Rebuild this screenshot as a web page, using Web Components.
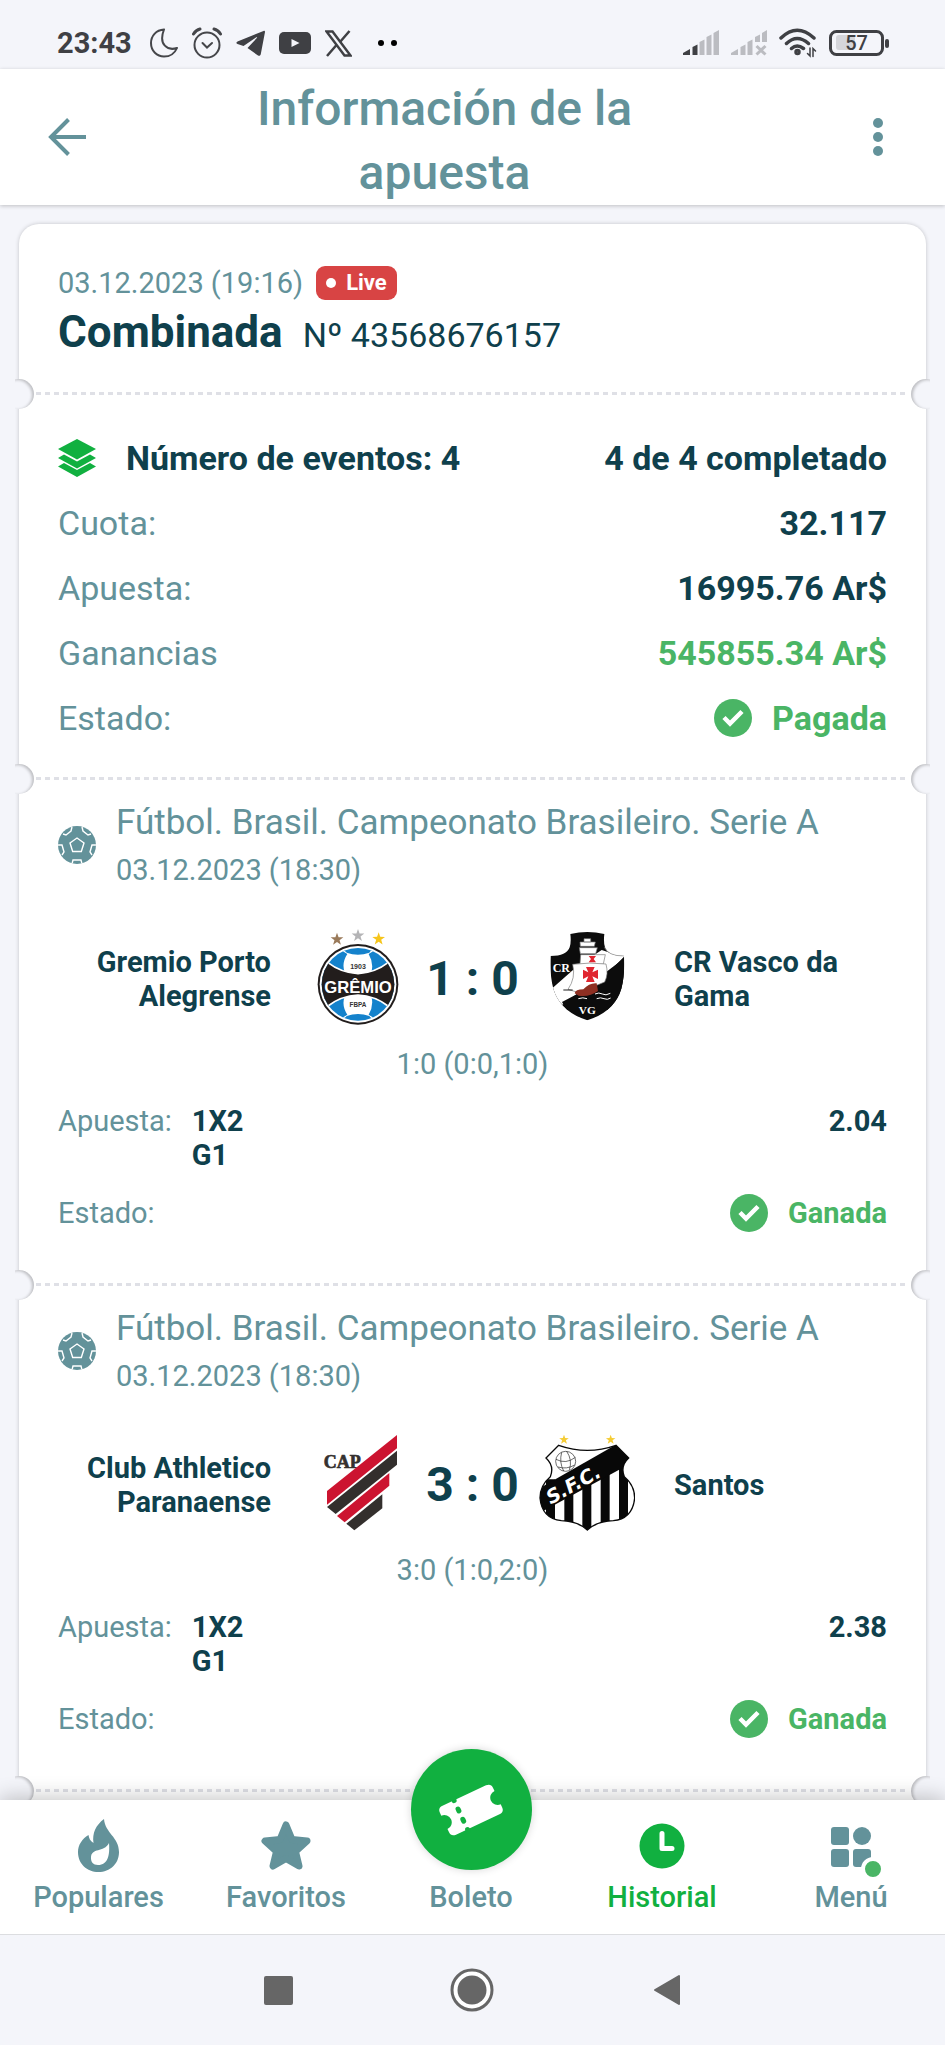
<!DOCTYPE html>
<html lang="es">
<head>
<meta charset="utf-8">
<meta name="viewport" content="width=device-width, initial-scale=1">
<title>Información de la apuesta</title>
<style>
  :root {
    --bg: #f4f5fa;
    --muted: #63929a;
    --dark: #0f404c;
    --green: #11b040;
    --won: #4ab565;
  }
  body {
    margin: 0;
    background: var(--bg);
    color: var(--dark);
    font-family: Roboto, "Liberation Sans", sans-serif;
  }
</style>
</head>
<body>
<bet-page></bet-page>

<script>
const ICONS = {
  moon: `<svg width="28" height="30" viewBox="0 0 28 30" fill="none" stroke="#45464a" stroke-width="2" stroke-linejoin="round"><path d="M14 1.500C6 2 1 8 1 15c0 8 6 13.500 13 13.500 6 0 11-3.500 13-8.500-9 3-19-3-13-18.500z"/></svg>`,
  alarm: `<svg width="30" height="32" viewBox="0 0 30 32" fill="none" stroke="#45464a" stroke-width="2" stroke-linecap="round"><circle cx="15" cy="18" r="12.500"/><path d="M1.500 7Q4 3 8 2M28.500 7Q26 3 22 2" stroke-width="3"/><path d="M10.500 16l4.500 4.500 5-4.500"/></svg>`,
  telegram: `<svg width="29" height="26" viewBox="0 0 29 26" fill="#3f4044"><path d="M27.500 1L1.500 11.500c-1.500.8-1.500 2 0 2.500l6 2L20 7.500c1-.5 1.500 0 .8.600L11.500 18l10.500 7.500c1.500.8 2.500 0 2.800-1.500L29 2c0-1.200-.5-1.500-1.500-1z"/></svg>`,
  youtube: `<svg width="32" height="24" viewBox="0 0 32 24"><rect y="1" width="32" height="22" rx="5" fill="#3f4044"/><path d="M12.500 8v8l8-4z" fill="#f4f5fa"/></svg>`,
  x: `<svg width="27" height="27" viewBox="0 0 27 27" fill="none" stroke="#3f4044"><path d="M1.500 1.500h6l18 24h-6z" stroke-width="2.500"/><path d="M24.500 1L15 12M11.500 15L2 26" stroke-width="2.500"/></svg>`,
  more: `<svg width="31" height="8" viewBox="0 0 31 8"><circle cx="15" cy="4" r="3"/><circle cx="28" cy="4" r="3"/></svg>`,
  signal: `<svg width="36" height="26" viewBox="0 0 36 26"><g fill="#3f4044"><path d="M0 25v-2l7-4v6z"/><path d="M9.500 25V17l5-2.500V25z"/></g><g fill="#bbbcc1"><path d="M16.500 25V12l5-2.500V25zM23.500 25V7l5-2.500V25zM30.500 25V3L36 0v25z"/></g></svg>`,
  nosignal: `<svg width="36" height="26" viewBox="0 0 36 26"><path fill="#bbbcc1" d="M0 25v-2l7-4v6zM9.500 25V17l5-2.500V25zM16.500 25V12l5-2.500V25zM24 12V7l5-2.500V12zM31 12V3l5-3v12z"/><path d="M25.500 16l9 8.500M34.500 16l-9 8.500" stroke="#bbbcc1" stroke-width="3"/></svg>`,
  wifi: `<svg width="38" height="30" viewBox="0 0 38 30" fill="none" stroke="#3f4044" stroke-width="3.500" stroke-linecap="round"><path d="M2 10Q18 -5.500 35 10M7.500 15.500Q18 5.500 29.500 15.500M12.500 20.500Q18 15.500 24.500 20.500" /><circle cx="18.500" cy="24" r="1.500"/><path d="M31 20v8l-2.500-2.500M34 28.500v-8l2.500 2.500" stroke-width="1.500"/></svg>`,
  battery: `<svg width="60" height="28" viewBox="0 0 60 28"><rect x="7" y="6" width="19" height="15" rx="3" fill="#d5d6db"/><rect x="1.500" y="2.500" width="52" height="23" rx="6" fill="none" stroke="#3f4044" stroke-width="3"/><rect x="56" y="10" width="4" height="9" rx="2" fill="#3f4044"/><text x="27.500" y="21" font-family="Roboto, sans-serif" font-size="20" font-weight="500" text-anchor="middle" fill="#3f4044">57</text></svg>`,
  back: `<svg width="38" height="38" viewBox="0 0 38 38" fill="none" stroke="#63929a" stroke-width="4"><path d="M38 19H3M20.500 1.500L3 19l17.500 17.500"/></svg>`,
  dots: `<svg width="10" height="38" viewBox="0 0 10 38" fill="#63929a"><circle cx="5" cy="5" r="5"/><circle cx="5" cy="19" r="5"/><circle cx="5" cy="33" r="5"/></svg>`,
  layers: `<svg width="38" height="38" viewBox="0 0 38 38" fill="#11b040"><path d="M19 0l19 10-19 10.500L0 10z"/><path d="M0 19l6-3.500 13 7 13-7 6 3.500-19 10.500z"/><path d="M0 27.500L6 24l13 7 13-7 6 3.500L19 38z"/></svg>`,
  ball: `<svg width="38" height="38" viewBox="0 0 38 38"><defs><clipPath id="c"><circle cx="19" cy="19" r="19"/></clipPath></defs><g clip-path="url(#c)"><rect width="38" height="38" fill="#63929a"/><g fill="none" stroke="#fff" stroke-width="1.400"><path d="M19 12l7 5-2.700 8.500h-8.600L12 17z"/><path d="M14 1l-1 4-5 4-3-1M24 1l1 4 5 4 3-1M0 19l4 0 2 7-2 3M38 19h-4l-2 7 2 3M14 38l1-4h8l1 4"/></g></g></svg>`,
  check: `<svg width="38" height="38" viewBox="0 0 38 38"><circle cx="19" cy="19" r="19" fill="#4ab565"/><path d="M10 18.500l6 6L28 12.500" fill="none" stroke="#fff" stroke-width="4.500"/></svg>`,
  flame: `<svg width="42" height="54" viewBox="0 0 42 54"><path fill="#63929a" fill-rule="evenodd" d="M26 0C18 6 14 14 15.500 24 12 22 11 19 10.500 16 4 20 0 26 0 33c0 12 9 20 20.500 20S41 45 41 33C41 18 27 14 26 0zM31 24c1 12-1 22-11 22-5 0-7-3-7-7 0-11 13-5 18-15z"/></svg>`,
  star: `<svg width="52" height="50" viewBox="0 0 52 50"><path d="M26 4l6 14.500 15 1.500-11.500 10.500L39 45l-13-7.500L13 45l3.500-14.500L5 20l15-1.500z" fill="#63929a" stroke="#63929a" stroke-width="7" stroke-linejoin="round"/></svg>`,
  clock: `<svg width="46" height="46" viewBox="0 0 46 46"><circle cx="23" cy="23" r="22.500" fill="#11b040"/><path d="M23 10.500v15h10" fill="none" stroke="#fff" stroke-width="5" stroke-linecap="round" stroke-linejoin="round"/></svg>`,
  grid: `<svg width="40" height="62" viewBox="0 -12 40 62" overflow="visible"><g fill="#63929a"><rect width="18" height="18" rx="3"/><circle cx="31" cy="9" r="9"/><rect y="22" width="18" height="18" rx="3"/><rect x="22" y="22" width="18" height="18" rx="3"/></g><circle cx="42" cy="42" r="10" fill="#4ab565" stroke="#fff" stroke-width="4"/></svg>`,
  ticket: `<svg width="66" height="58" viewBox="-99 -87 198 174"><g transform="rotate(-25)"><path fill="#fff" d="M-72 -48H72Q88 -48 88 -32V-22A22 22 0 0 0 88 22V32Q88 48 72 48H-72Q-88 48 -88 32V22A22 22 0 0 0 -88 -22V-32Q-88 -48 -72 -48z"/><path d="M-34 -53V53" stroke="#11b040" stroke-width="15" stroke-linecap="round" stroke-dasharray="6 28"/></g></svg>`,
  square: `<svg width="29" height="29" viewBox="0 0 29 29"><rect width="29" height="29" rx="2" fill="#666"/></svg>`,
  home: `<svg width="44" height="44" viewBox="0 0 44 44"><circle cx="22" cy="22" r="20" fill="#fff" stroke="#666" stroke-width="3"/><circle cx="22" cy="22" r="14.500" fill="#666"/></svg>`,
  triangle: `<svg width="28" height="32" viewBox="0 0 28 32"><path d="M2 16L26 2v28z" fill="#666" stroke="#666" stroke-width="2" stroke-linejoin="round"/></svg>`
};

// five pointed star for the club crests
function starPath(cx, cy, r) {
  let points = [];
  for (let i = 0; i < 10; i++) {
    const radius = i % 2 ? r * 0.4 : r;
    const angle = Math.PI * i / 5 - Math.PI / 2;
    points.push((cx + radius * Math.cos(angle)).toFixed(1) + ',' + (cy + radius * Math.sin(angle)).toFixed(1));
  }
  return points.join(' ');
}

const CRESTS = {
  gremio: `<svg viewBox="30 57 288 288">
    <polygon points="${starPath(111, 88, 20)}" fill="#9a7a5a"/>
    <polygon points="${starPath(174, 77, 20)}" fill="#b4b4b6"/>
    <polygon points="${starPath(236, 87, 20)}" fill="#f6c51b"/>
    <defs><clipPath id="g"><circle cx="174" cy="223" r="109"/></clipPath></defs>
    <circle cx="174" cy="223" r="121" fill="#221d1c"/>
    <circle cx="174" cy="223" r="115" fill="#fff"/>
    <g clip-path="url(#g)">
      <rect x="60" y="100" width="230" height="250" fill="#1482cc"/>
      <g fill="#fff">
        <path d="M110 112Q140 124 140 128Q174 140 208 128Q214 118 238 112L206 132Q222 160 214 186Q174 204 134 186Q124 160 142 132z"/>
        <path d="M110 334Q140 322 140 318Q174 306 208 318Q214 328 238 334L206 314Q222 286 214 260Q174 242 134 260Q124 286 142 314z"/>
      </g>
      <path d="M50 130L84 158Q122 188 174 191Q226 188 264 158L300 130V316L264 288Q226 258 174 255Q122 258 84 288L50 316z" fill="#221d1c" stroke="#fff" stroke-width="5"/>
    </g>
    <text x="174" y="249" text-anchor="middle" font-family="Liberation Sans, sans-serif" font-weight="700" font-size="50" fill="#fff">GRÊMIO</text>
    <text x="174" y="176" text-anchor="middle" font-family="Liberation Sans, sans-serif" font-weight="700" font-size="21" fill="#333">1903</text>
    <text x="174" y="290" text-anchor="middle" font-family="Liberation Sans, sans-serif" font-weight="700" font-size="19" fill="#333">FBPA</text>
  </svg>`,
  vasco: `<svg viewBox="717 57 288 288">
    <defs><clipPath id="v"><path d="M811 72Q862 60 913 72Q910 96 915 112Q924 138 972 138Q975 196 964 236Q944 304 862 331Q780 304 760 236Q749 196 752 138Q800 138 809 112Q814 96 811 72z"/></clipPath></defs>
    <g clip-path="url(#v)">
      <rect x="740" y="60" width="245" height="280" fill="#0c0c0c"/>
      <path d="M905 120L930 128 985 136 788 284 740 250 830 170z" fill="#fff"/>
      <path d="M896 216L972 140 985 300 800 300 786 276 836 250z" fill="#0c0c0c"/>
    </g>
    <path d="M913 112Q924 138 972 138" fill="none" stroke="#999" stroke-width="2"/>
    <g fill="#fff" stroke="#777" stroke-width="2">
      <path d="M840 96h46l-3 13h-42zM852 86h20v10h-20z"/>
      <path d="M838 113h54l-5 18h-46z"/>
      <path d="M842 134h74l-6 28h-70z"/>
      <path d="M818 163Q870 156 918 162Q926 192 914 216L836 248 804 238Q828 204 818 163z"/>
    </g>
    <g fill="#e0252f">
      <path d="M866 138h22l-7 9 7 10h-22l7-10z"/>
      <path d="M858 171h26l-7 16 17-8v28l-17-8 7 17h-26l7-17-16 8v-28l16 8z"/>
    </g>
    <path d="M824 250Q826 238 850 238Q868 218 890 220L894 243Q868 262 836 257z" fill="#8e2f22"/>
    <g fill="none" stroke="#fff" stroke-width="3">
      <path d="M885 252q12-6 22 0t24-2M890 266q12-5 22 0t20-2M835 266q14-5 26 0"/>
      <path d="M790 240h28" stroke="#222"/>
    </g>
    <g font-family="Liberation Serif, serif" font-weight="700" fill="#fff" text-anchor="middle">
      <text x="784" y="186" font-size="36">CR</text>
      <text x="862" y="312" font-size="34">VG</text>
    </g>
  </svg>`,
  cap: `<svg viewBox="30 57 288 288">
    <text x="127" y="156" text-anchor="middle" font-family="Liberation Serif, serif" font-weight="700" font-size="54" fill="#35312f" stroke="#35312f" stroke-width="2">CAP</text>
    <path d="M291 57v40L81 266v-41z" fill="#cc1430"/>
    <path d="M291 104v42L107 294 81 273z" fill="#332f2d"/>
    <path d="M268 171v38L134 319l-23-19z" fill="#cc1430"/>
    <path d="M247 235v42l-84 66-24-20z" fill="#332f2d"/>
  </svg>`,
  santos: `<svg viewBox="717 57 288 288">
    <polygon points="${starPath(792, 71, 15)}" fill="#f5cc35"/>
    <polygon points="${starPath(932, 71, 15)}" fill="#f5cc35"/>
    <defs><clipPath id="s"><path d="M776 88Q862 118 948 88L986 126Q960 150 973 182Q1004 208 1004 246Q998 308 940 314Q890 316 862 342Q834 316 784 314Q726 308 720 246Q720 208 751 182Q764 150 738 126z"/></clipPath></defs>
    <g clip-path="url(#s)">
      <rect x="717" y="80" width="290" height="265" fill="#fff"/>
      <path d="M738 190h27v160h-27zM793 190h27v160h-27zM847 160h27v190h-27zM902 140h27v210h-27zM957 120h27v230h-27z" fill="#080808"/>
      <path d="M717 218L948 86 1000 110 985 146 717 292z" fill="#080808"/>
    </g>
    <path d="M776 88Q862 118 948 88L986 126Q960 150 973 182Q1004 208 1004 246Q998 308 940 314Q890 316 862 342Q834 316 784 314Q726 308 720 246Q720 208 751 182Q764 150 738 126z" fill="none" stroke="#080808" stroke-width="4"/>
    <g fill="#fff" stroke="#222" stroke-width="2"><circle cx="797" cy="136" r="30"/><path d="M768 130q30 16 58-6M785 109q-8 30 6 56M800 106q18 26 8 56M774 153q26 8 50-6" fill="none"/></g>
    <text transform="translate(752 266) rotate(-29)" font-family="DejaVu Sans, sans-serif" font-weight="700" font-style="italic" font-size="58" fill="#fff">S.F.C.</text>
  </svg>`
};

class AppIcon extends HTMLElement {
  constructor() {
    super();
    this.attachShadow({mode: 'open'});
  }

  connectedCallback() {
    this.shadowRoot.innerHTML = `
      <style>
        :host { display: block; flex: none; }
        svg { display: block; }
      </style>
      ${ICONS[this.getAttribute('name')]}
    `;
  }
}
customElements.define('app-icon', AppIcon);

class TeamCrest extends HTMLElement {
  constructor() {
    super();
    this.attachShadow({mode: 'open'});
  }

  connectedCallback() {
    this.shadowRoot.innerHTML = `
      <style>
        :host { display: block; width: 96px; height: 96px; }
        svg { display: block; width: 100%; height: 100%; }
      </style>
      ${CRESTS[this.getAttribute('team')]}
    `;
  }
}
customElements.define('team-crest', TeamCrest);

class StatusBar extends HTMLElement {
  constructor() {
    super();
    this.attachShadow({mode: 'open'});
    this.shadowRoot.innerHTML = `
      <style>
        :host {
          display: flex;
          justify-content: space-between;
          align-items: center;
          box-sizing: border-box;
          height: 69px;
          padding: 17px 56px 0 57px;
          color: #3f4044;
          font-size: 29px;
          font-weight: 700;
          line-height: 34px;
        }
        .left, .right { display: flex; align-items: center; }
        .left { gap: 14px; }
        .right { gap: 12px; }
        time { margin-right: 4px; }
      </style>
      <div class="left">
        <time>23:43</time>
        <app-icon name="moon"></app-icon>
        <app-icon name="alarm"></app-icon>
        <app-icon name="telegram"></app-icon>
        <app-icon name="youtube"></app-icon>
        <app-icon name="x"></app-icon>
        <app-icon name="more"></app-icon>
      </div>
      <div class="right">
        <app-icon name="signal"></app-icon>
        <app-icon name="nosignal"></app-icon>
        <app-icon name="wifi"></app-icon>
        <app-icon name="battery"></app-icon>
      </div>
    `;
  }
}
customElements.define('status-bar', StatusBar);

class PageHeader extends HTMLElement {
  constructor() {
    super();
    this.attachShadow({mode: 'open'});
    this.shadowRoot.innerHTML = `
      <style>
        :host { display: block; position: relative; z-index: 1; }
        header {
          display: grid;
          grid-template-columns: 134px 1fr 190px;
          align-items: center;
          background: #fff;
          box-shadow: 0 1px 4px rgba(0, 0, 0, .22);
        }
        h1 {
          margin: 0;
          padding: 8px 40px 0;
          color: var(--muted);
          font-size: 48px;
          font-weight: 500;
          line-height: 64px;
          text-align: center;
        }
        button { display: flex; border: 0; background: none; cursor: pointer; }
        .back { padding: 12px 48px; }
        .menu { justify-self: end; padding: 12px 62px; }
      </style>
      <header>
        <button class="back" aria-label="Atrás"><app-icon name="back"></app-icon></button>
        <h1><slot></slot></h1>
        <button class="menu" aria-label="Más opciones"><app-icon name="dots"></app-icon></button>
      </header>
    `;
  }
}
customElements.define('page-header', PageHeader);

// one block of the ticket, closed by a perforated line
class TicketSection extends HTMLElement {
  constructor() {
    super();
    this.attachShadow({mode: 'open'});
    this.shadowRoot.innerHTML = `
      <style>
        :host { display: block; position: relative; padding: 0 39px; }
        .cut {
          position: absolute;
          left: 17px;
          right: 17px;
          bottom: -1px;
          height: 3px;
          background: repeating-linear-gradient(to right, #dfe0e6 0 5px, transparent 5px 9px);
        }
        .notch {
          position: absolute;
          bottom: -15px;
          width: 30px;
          height: 30px;
          border-radius: 50%;
          background: var(--bg);
          z-index: 1;
        }
        .start { left: -15px; box-shadow: inset -2px 1px 3px rgba(0, 0, 0, .22); clip-path: inset(0 0 0 11px); }
        .end { right: -15px; box-shadow: inset 2px 1px 3px rgba(0, 0, 0, .22); clip-path: inset(0 11px 0 0); }
      </style>
      <slot></slot>
      <div class="cut"></div>
      <div class="notch start"></div>
      <div class="notch end"></div>
    `;
  }
}
customElements.define('ticket-section', TicketSection);

class BetStatus extends HTMLElement {
  constructor() {
    super();
    this.attachShadow({mode: 'open'});
    this.shadowRoot.innerHTML = `
      <style>
        :host { display: flex; align-items: center; gap: 20px; color: var(--won); font-weight: 700; }
      </style>
      <app-icon name="check"></app-icon>
      <span><slot></slot></span>
    `;
  }
}
customElements.define('bet-status', BetStatus);

class BetHead extends HTMLElement {
  constructor() {
    super();
    this.attachShadow({mode: 'open'});
    this.shadowRoot.innerHTML = `
      <style>
        :host { display: block; padding: 42px 0 34px; }
        .date, .title { display: flex; }
        .date {
          align-items: center;
          gap: 13px;
          margin-bottom: 7px;
          color: var(--muted);
          font-size: 29px;
          line-height: 34px;
        }
        .live {
          display: flex;
          align-items: center;
          gap: 10px;
          padding: 0 10px;
          border-radius: 9px;
          background: #d84444;
          color: #fff;
          font-size: 22px;
          font-weight: 700;
        }
        .live::before {
          content: "";
          width: 10px;
          height: 10px;
          border-radius: 50%;
          background: #fff;
        }
        .title { align-items: baseline; gap: 20px; line-height: 50px; }
        h2 { margin: 0; font-size: 44px; }
        .number { font-size: 34px; }
      </style>
      <div class="date"><time>03.12.2023 (19:16)</time><span class="live">Live</span></div>
      <div class="title"><h2>Combinada</h2><span class="number">Nº 43568676157</span></div>
    `;
  }
}
customElements.define('bet-head', BetHead);

class BetSummary extends HTMLElement {
  constructor() {
    super();
    this.attachShadow({mode: 'open'});
    this.shadowRoot.innerHTML = `
      <style>
        :host { display: block; padding: 44px 0 41px; font-size: 34px; line-height: 40px; }
        dl { display: grid; gap: 25px; margin: 0; }
        .row { display: flex; justify-content: space-between; align-items: center; }
        dt { color: var(--muted); }
        dd { margin: 0; font-weight: 700; }
        .events { display: flex; align-items: center; gap: 30px; color: var(--dark); font-weight: 700; }
        .win { color: var(--won); }
      </style>
      <dl>
        <div class="row"><dt class="events"><app-icon name="layers"></app-icon>Número de eventos: 4</dt><dd>4 de 4 completado</dd></div>
        <div class="row"><dt>Cuota:</dt><dd>32.117</dd></div>
        <div class="row"><dt>Apuesta:</dt><dd>16995.76 Ar$</dd></div>
        <div class="row"><dt>Ganancias</dt><dd class="win">545855.34 Ar$</dd></div>
        <div class="row"><dt>Estado:</dt><dd><bet-status>Pagada</bet-status></dd></div>
      </dl>
    `;
  }
}
customElements.define('bet-summary', BetSummary);

class BetEvent extends HTMLElement {
  constructor() {
    super();
    this.attachShadow({mode: 'open'});
  }

  connectedCallback() {
    const get = name => this.getAttribute(name);
    this.shadowRoot.innerHTML = `
      <style>
        :host { display: block; padding: 24px 0 53px; font-size: 29px; line-height: 34px; }
        .league { display: flex; align-items: center; gap: 20px; color: var(--muted); }
        h3 { margin: 0 0 10px; font-size: 35px; font-weight: 400; line-height: 40px; }
        time { display: block; }
        .match {
          display: grid;
          grid-template-columns: 1fr 96px 133px 96px 1fr;
          align-items: center;
          margin: 42px 0 22px;
          font-weight: 700;
        }
        .home, .away, .score { padding-top: 4px; }
        .home { padding-right: 39px; text-align: right; }
        .away { padding-left: 39px; }
        .score { font-size: 48px; line-height: 60px; text-align: center; }
        .periods { color: var(--muted); text-align: center; }
        .bet { display: flex; gap: 20px; margin: 23px 0 22px; }
        .label { color: var(--muted); }
        .pick { width: 80px; font-weight: 700; }
        .odds { margin-left: auto; font-weight: 700; }
        .state { display: flex; justify-content: space-between; align-items: center; }
      </style>
      <div class="league">
        <app-icon name="ball"></app-icon>
        <div>
          <h3>${get('league')}</h3>
          <time>${get('date')}</time>
        </div>
      </div>
      <div class="match">
        <div class="home">${get('home')}</div>
        <team-crest team="${get('home-crest')}"></team-crest>
        <div class="score">${get('score')}</div>
        <team-crest team="${get('away-crest')}"></team-crest>
        <div class="away">${get('away')}</div>
      </div>
      <div class="periods">${get('periods')}</div>
      <div class="bet">
        <span class="label">Apuesta:</span>
        <span class="pick">1X2 G1</span>
        <span class="odds">${get('odds')}</span>
      </div>
      <div class="state">
        <span class="label">Estado:</span>
        <bet-status>Ganada</bet-status>
      </div>
    `;
  }
}
customElements.define('bet-event', BetEvent);

class TabBar extends HTMLElement {
  constructor() {
    super();
    this.attachShadow({mode: 'open'});
    this.shadowRoot.innerHTML = `
      <style>
        :host { display: block; position: relative; z-index: 2; }
        nav {
          display: grid;
          grid-template-columns: 197fr 178fr 192fr 190fr 188fr;
          height: 134px;
          border-bottom: 1px solid #dcdde0;
          background: #fff;
          box-shadow: 0 -2px 20px rgba(0, 0, 0, .24);
        }
        a {
          display: flex;
          flex-direction: column;
          align-items: center;
          position: relative;
          color: var(--muted);
          font-size: 29px;
          font-weight: 500;
          line-height: 34px;
          text-decoration: none;
        }
        .icon {
          display: flex;
          justify-content: center;
          align-items: center;
          box-sizing: border-box;
          height: 80px;
          padding-top: 12px;
        }
        .active { color: var(--green); }
        .ticket {
          position: absolute;
          bottom: 64px;
          display: flex;
          justify-content: center;
          align-items: center;
          width: 121px;
          height: 121px;
          border-radius: 50%;
          background: var(--green);
          box-shadow: 0 0 8px rgba(0, 0, 0, .16);
        }
      </style>
      <nav>
        <a href="#populares"><span class="icon"><app-icon name="flame"></app-icon></span>Populares</a>
        <a href="#favoritos"><span class="icon"><app-icon name="star"></app-icon></span>Favoritos</a>
        <a href="#boleto"><span class="icon"></span><span class="ticket"><app-icon name="ticket"></app-icon></span>Boleto</a>
        <a href="#historial" class="active"><span class="icon"><app-icon name="clock"></app-icon></span>Historial</a>
        <a href="#menu"><span class="icon"><app-icon name="grid"></app-icon></span>Menú</a>
      </nav>
    `;
  }
}
customElements.define('tab-bar', TabBar);

class SystemBar extends HTMLElement {
  constructor() {
    super();
    this.attachShadow({mode: 'open'});
    this.shadowRoot.innerHTML = `
      <style>
        :host {
          display: grid;
          grid-template-columns: 28fr 30fr 30fr 30fr 28fr;
          align-items: center;
          position: relative;
          z-index: 3;
          height: 110px;
          border-bottom: 3px solid #fff;
          background: var(--bg);
        }
        button { display: flex; justify-self: center; padding: 8px; border: 0; background: none; }
        button:first-of-type { grid-column: 2; }
      </style>
      <button aria-label="Recientes"><app-icon name="square"></app-icon></button>
      <button aria-label="Inicio"><app-icon name="home"></app-icon></button>
      <button aria-label="Volver"><app-icon name="triangle"></app-icon></button>
    `;
  }
}
customElements.define('system-bar', SystemBar);

class BetPage extends HTMLElement {
  constructor() {
    super();
    this.attachShadow({mode: 'open'});
    this.shadowRoot.innerHTML = `
      <style>
        :host { display: flex; flex-direction: column; height: 100vh; }
        main {
          flex: 1;
          min-height: 0;
          padding: 19px 19px 0;
          overflow-y: auto;
          scrollbar-width: none;
        }
        .card {
          padding-bottom: 60px;
          border-radius: 20px;
          background: #fff;
          box-shadow: 0 0 4px rgba(0, 0, 0, .2);
        }
      </style>
      <status-bar></status-bar>
      <page-header>Información de la apuesta</page-header>
      <main>
        <div class="card">
          <ticket-section><bet-head></bet-head></ticket-section>
          <ticket-section><bet-summary></bet-summary></ticket-section>
          <ticket-section>
            <bet-event league="Fútbol. Brasil. Campeonato Brasileiro. Serie A" date="03.12.2023 (18:30)"
              home="Gremio Porto Alegrense" home-crest="gremio" away="CR Vasco da Gama" away-crest="vasco"
              score="1 : 0" periods="1:0 (0:0,1:0)" odds="2.04"></bet-event>
          </ticket-section>
          <ticket-section>
            <bet-event league="Fútbol. Brasil. Campeonato Brasileiro. Serie A" date="03.12.2023 (18:30)"
              home="Club Athletico Paranaense" home-crest="cap" away="Santos" away-crest="santos"
              score="3 : 0" periods="3:0 (1:0,2:0)" odds="2.38"></bet-event>
          </ticket-section>
        </div>
      </main>
      <tab-bar></tab-bar>
      <system-bar></system-bar>
    `;
  }
}
customElements.define('bet-page', BetPage);
</script>
</body>
</html>
